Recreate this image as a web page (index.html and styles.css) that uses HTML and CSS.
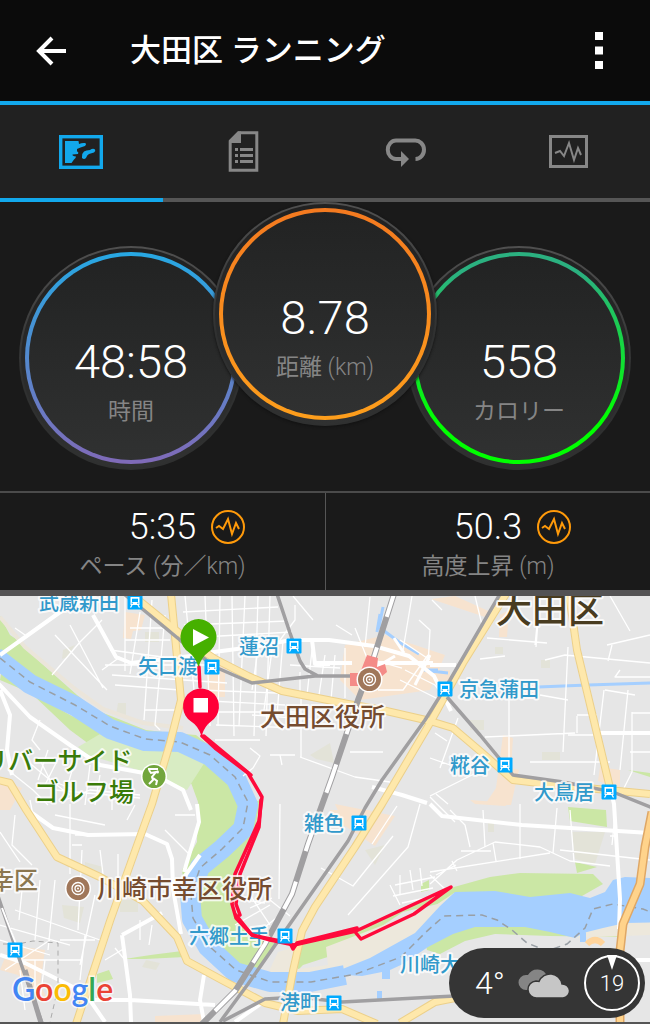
FILE: index.html
```html
<!DOCTYPE html>
<html lang="ja">
<head>
<meta charset="utf-8">
<meta name="viewport" content="width=device-width, initial-scale=1">
<title>大田区 ランニング</title>
<link rel="stylesheet" href="styles.css">
</head>
<body>
<div class="app">
  <header class="bar">
    <button class="bar-btn" aria-label="戻る">
      <svg width="30" height="30" viewBox="0 0 30 30"><path d="M16 2 3 15l13 13M3 15h27" fill="none" stroke="#fff" stroke-width="4"/></svg>
    </button>
    <h1 class="title">大田区 ランニング</h1>
    <button class="bar-btn bar-menu" aria-label="メニュー">
      <svg width="8" height="37" viewBox="0 0 8 37" fill="#fff"><path d="M0 0h8v8H0zM0 14.500h8v8H0zM0 29h8v8H0z"/></svg>
    </button>
  </header>

  <nav class="tabs" aria-label="表示">
    <button class="tab tab-on" aria-label="地図">
      <svg width="44" height="34" viewBox="0 0 44 34"><rect x="1.700" y="1.700" width="40.600" height="30.600" fill="none" stroke="currentColor" stroke-width="3.400"/><path fill="currentColor" d="M6 6H19.500L20 9Q23 7.500 26 8Q28 9 26 11L21.500 12.500L18 14L18 16.500Q20 17 19 19L13.500 19.500Q13 21 17 21.500Q17 23 15 24.500L12.500 28H6ZM23 22Q23 18 25 16.500Q27 15 31 15Q34 13 36 14.500Q37 16 35 17.500L30 19Q28 20 27 23Q25 25 23 23Z"/></svg>
    </button>
    <button class="tab" aria-label="統計">
      <svg width="31" height="41" viewBox="0 0 31 41"><path d="M10.500 1.700H28.800V39.300H2.200V10z" fill="none" stroke="currentColor" stroke-width="3"/><path d="M1 9.500 10 .5h3V12H1zM7 17h3v3H7zM12 17h13v3H12zM7 23h3v3H7zM12 23h13v3H12zM7 29h3v3H7zM12 29h13v3H12z" fill="currentColor"/></svg>
    </button>
    <button class="tab" aria-label="ラップ">
      <svg width="42" height="30" viewBox="0 0 42 30"><path d="M17 22h-6a8 9 0 0 1 0-18.500h19A8.500 9 0 0 1 30.500 22" fill="none" stroke="currentColor" stroke-width="4"/><path d="M16 14v16l8-8z" fill="currentColor"/></svg>
    </button>
    <button class="tab" aria-label="グラフ">
      <svg width="39" height="33" viewBox="0 0 39 33"><rect x="1.500" y="1.500" width="36" height="30" fill="none" stroke="currentColor" stroke-width="3"/><path d="m6 18 5-2 4 5 5-13 5 17 4-12 3 7" fill="none" stroke="currentColor" stroke-width="2"/></svg>
    </button>
  </nav>

  <main>
    <section class="dials">
      <div class="dial dial-low">
        <div class="ring ring-time"><span class="big">48:58</span><span class="label">時間</span></div>
      </div>
      <div class="dial dial-mid">
        <div class="ring ring-dist"><span class="big">8.78</span><span class="label">距離 <span class="unit">(km)</span></span></div>
      </div>
      <div class="dial dial-low">
        <div class="ring ring-cal"><span class="big">558</span><span class="label">カロリー</span></div>
      </div>
    </section>

    <section class="stats">
      <div class="stat">
        <div class="stat-row">
          <span class="value">5:35</span>
          <button class="chart" aria-label="ペースのグラフ"><svg width="34" height="34" viewBox="0 0 34 34" fill="none" stroke="#ff9a0a"><circle cx="17" cy="17" r="16" stroke-width="2"/><path d="m5 18 3-2 4 3 5-10 4 15 4-11 3 6" stroke-width="2"/></svg></button>
        </div>
        <span class="label">ペース <span class="unit">(</span>分／<span class="unit">km)</span></span>
      </div>
      <div class="stat">
        <div class="stat-row">
          <span class="value">50.3</span>
          <button class="chart" aria-label="高度のグラフ"><svg width="34" height="34" viewBox="0 0 34 34" fill="none" stroke="#ff9a0a"><circle cx="17" cy="17" r="16" stroke-width="2"/><path d="m5 18 3-2 4 3 5-10 4 15 4-11 3 6" stroke-width="2"/></svg></button>
        </div>
        <span class="label">高度上昇 <span class="unit">(m)</span></span>
      </div>
    </section>

    <section class="map" aria-label="地図">
      <svg class="map-art" viewBox="0 596 650 426">
        <defs>
          <g id="station"><rect x="-7.500" y="-7.500" width="15" height="15" rx="1" fill="#0af"/><path d="M-4.500-5h9V3h-9z" fill="#fff"/><path d="M-3-3.300h6V0h-6z" fill="#0af"/><path d="M-3.500 1.200h1.500M2 1.200h1.500" stroke="#0af"/><path d="m-3 3-1.500 2.500M3 3l1.500 2.500" stroke="#fff" stroke-width="1.300"/></g>
          <g id="office"><circle r="13" fill="#fff"/><circle r="11.500" fill="#a0775a"/><circle r="6" fill="none" stroke="#fff" stroke-width="1.300"/><circle r="3" fill="none" stroke="#fff" stroke-width="1.300"/><circle r="1" fill="#fff"/></g>
        </defs>
        <rect y="596" width="650" height="426" fill="#e6e6e6"/>

        <g fill="#f7e3cf">
          <path d="M125 612l20 3-4 15-8 1-2 8-8-1zM345 645l40-10 60 20-15 35-70 10-20-20zM205 650l20 12v35h-17zM430 672l20-2v20l-20-8zM455 596l40 18-4 5-60-20zM500 615l9-5-2 27h-8zM503 735l10 3-2 30 8 2-8 35-25-2 10-15zM600 767l20 3v18l-22-7zM0 780l22 8-12 22H0zM10 945l35 5-5 35 8 15-30-25-18-5zM330 810h40l-10 15-25 2zM335 804l60 12-20 30-30-20zM155 1016l50-2-5 8h-45zM470 800l40 3-5 3-30-2z"/>
        </g>
        <g fill="#e3e3d8">
          <path d="M145 632h14v10h-14zM63 650l12-5-8 12-5 2zM118 703h8v12h-10zM310 755l20-12 4 20-18-4zM495 647h8v7h-8zM541 660h9v8h-9zM470 720h14v10h-14zM542 752h18v8h-18zM85 862l18 5-3 6-15-3zM62 905l22 2-4 16-16-5zM120 900h18v12h-18zM146 960l14 3-4 7-14-3zM572 832h33l-10 32-20-5zM488 823h6v9h-6zM365 850l20-5-10 20z"/>
        </g>

        <g fill="#cbe7a5">
          <path d="M0 616l10 19 15 10 15 17 37 33 20 16-10 5L0 660zM0 680l35 15 35 20 50 24 80 8 30 40 15 35-20 30-28 26-13-2 13-26 5-46-10-20-32-15-45-12-18-7-27-20-37-35-30-32zM98 711l18 7 30 12 25 3 25 2 15 12-14 8-35-10-45-10z"/>
          <path d="M260 800l-4 25-20 45-2 40 10 20 32 14-25 35-30-16-25-35-3-45 30-30 20-20 10-30z"/>
          <path d="M190 780l40 5 6 30-20 28-15 20-18 15-1-8 15-28 1-40z"/>
          <path d="M300 945l60-15 94-43 36-10 30-4 73 1 10 10-35 20-100-7-65 15-60 40-40 13-6 6h-3z"/>
          <path d="M427 950l-4-15 25-10 60-5 112 3v14l-70-1-55-2-30 7-25 13zM568 807l38 3 1 17-37-6zM575 862l22 5-20 6zM628 770l22 3v4zM125 959q30-5 57-8l3 6-40 2zM97 974l12-4 4 9-16 4zM421 884l8-4v10l-8 2z"/>
        </g>
        <path d="M100 734l32 12 45 3 28 13-18 28-25-9-24-11-50-15-10-8z" fill="#d8ecc3"/>
        <path d="M278 952l17-5 3 22 30-4-2-18 110-42 18-12 10 2-80 67-50 18-70 2zM570 938l10-14 70-2v13z" fill="#ede8dc"/>
        <path d="M0 617l25 30 50 42 28 20 40 14 40 5" fill="none" stroke="#ebe5da" stroke-width="4"/>

        <g fill="none" stroke="#a5cfff">
          <path stroke-width="20" stroke-linejoin="round" d="M-5 657l35 27 45 22 35 23 35 12 35 1 30 14 26 23 12 26-5 24-21 20-22 18-10 27 2 25 16 28 27 25 35 10h40l35-7"/>
          <path stroke-width="3" d="M538 687l50-2 62-2M430 671l18 2M383 607l-4 20 20 15 20 12M424 670h14M377 632l3-18"/>
        </g>
        <path fill="#a5cfff" d="M330 974l40-16 45-25 25-27 15-14 40-1 35 6 40-4 20 5 15-6 8-12 12-3 45 2v43l-45 1-22 5-20 5-8 5-25-6-25-5h-50l-22 7-25 13-25 17-13 6v9h-8v-7l-20 4zM377 991h5v8h-5zM580 930h6v12h-6z"/>
        <path fill="none" stroke="#999fa5" stroke-width="1.500" stroke-dasharray="7 5" d="M0 658l30 24 45 23 35 21 35 13 35 3 30 13 25 22 13 25-5 26-21 21-22 19-9 27 2 23 16 28 27 24 35 12h40l45-8 45-17 25-25 18-16 38-1 15 5 15 10 15 13 20 8 20-7 18-16 8-19 20-5 30 5 20 8"/>

        <g fill="none" stroke="#fff" stroke-width="1.300" stroke-linejoin="round">
          <path d="M55 635l52 55M70 625l33 63M52 675l28-33 22-22M15 628l10 7M125 596v75M140 612l-10 62M152 600l-8 120M165 615l-10 110 5 5M105 665h115M110 650l60 8M115 685l65 5M112 675l115 8M145 710h30M125 640h45M130 628h42M120 657l-18 13M185 596l12 125M205 596l5 130M220 596l-2 130M232 596l2 140M245 596l-6 130M258 596l-4 140M270 596l-4 140"/>
          <path d="M183 612l95-5M184 625l104-4M184 638l108-6M190 700l95 5M200 690l100 4M210 712h90M216 725l84 3M215 740h45M258 650l-6 40M272 650l-8 60M283 640l-6 75M295 605v15l-15 20M300 672v25M312 650l-5 45M325 655l-6 40M335 655l-4 45M345 648v50M290 665l50 3"/>
          <path d="M250 748l10 8-7 12-10 8M270 755h25M301 695v62M300 757l55 20 35 5M350 752h33M252 715l70 5M280 755l2 10M293 596l20 24M352 635l-16-10M370 597l-5 50M378 690h25l25-35M400 640l30 20M400 680l40 20M405 670l30 15 15 20M355 628l12 30 35 10M412 596l-10 60M419 620l11 10-2 35"/>
          <path d="M432 600l10 10M487 638l60 5M537 625l-2 20M568 647l-5 105M545 660l20-5 85 8M612 645l-4 16M620 670l-5 7h35M607 645l43-10M540 597l-4 50M604 690l-10 85M628 690l-8 80M605 690l30 5M632 712v60l-10 20M632 713h18M630 752h20M577 716v17M577 715h20M485 737l90-4M509 700v60M540 695l28 5M568 735h25M530 762h80M435 733l12 8M440 768l18-50M430 758l20 7M430 796l20-10 30-15M436 794l12 10M450 810l15 15 5 22M483 810l2 37M520 804v55M557 808l-4 45M570 810l4 52M560 850l90 10M480 659l25-3M475 596l8 33M610 596l20 35M430 797l25 25"/>
          <path d="M430 884l27-24 38-18 45 5 30 14 40 5M436 875l20-10M452 861l5 10M493 843l3 18M430 872l120-19M461 851h30M615 815l-3 30M610 836h6M430 875l16 15M390 885l10 20M400 875v20M410 870l3 20M420 868l2 18M395 885l40-8M393 896l40-8M402 903l33-7M372 844l25-38M348 915l60-68 12-43M393 836l-40 50-32-18"/>
          <path d="M70 804v70M82 850l-4 80M75 835h43M72 845h10M100 850l3 24M118 854v28M30 800l5 25 22 30M15 815l-3 30 20 20M0 832l20 30M24 870l-5 50M40 880l-5 60M55 880l-7 70M15 910l85 30M0 925l70 20M0 940l50 15M5 970l45-30M95 895l-15 70M60 940h35M115 948l10 12M105 960l20-12M165 830l25 25M175 815h20M140 920v20M152 925l-3 20M85 935l-5 45M12 960h70M20 970l5 40M35 960v40M45 960l-5 40M280 804l-1 95M265 896l25 20M250 895l20 30M235 925l35-20M280 915l-25 20M250 908l22-10M230 898l35 5"/>
          <path d="M40 720l-8 20 8 10M20 755l30 25 25 10M8 770l25 20 15 15M40 760l10 20 20 15M48 750l-10 30M60 755l-15 30M75 760l-10 35M90 765l-5 40M100 775l-5 30M112 780v30M65 800l25-10 50 5M55 815l50 10M55 790l85 8M135 805l-8 15"/>
        </g>
        <g fill="none" stroke="#fff" stroke-width="4" stroke-linejoin="round">
          <path d="M0 655l63-45 30-14M-2 683l32 34 40 28 30 20 55 10 28 15 8 20M93 615l23 42 15 6 60-7 23-4 45-6 32-6h38l45 6 35 10 25 20 17 35M312 640l3 24h15M368 663h65M315 663h37M430 665h26M0 690l10 25-3 35 5 25M598 733h52M610 787l4 17 6 95-1 30M430 804l12 12 80 9 128 8M25 808l28 20 35 7 57-1 22 10 5 15 1 30 8 45M122 935l40-22M122 935l8 60 1 27M95 1000h35l85 5M200 855l-18 25M197 804l2 18-15 50M204 975l-4 25 4 22M0 955l25 8 60 30 20 29M372 787l30 8 25 8M625 960h25M235 1022l28-20"/>
          <path d="M394 638l10 15M395 656l-20 12M430 655l-15 30" stroke-width="3"/>
        </g>

        <g id="roads" fill="none" stroke-linejoin="round">
          <g stroke="#ecd08a" stroke-width="8">
            <path d="M171 594l6 63 4 43-11 43-18 61-12 33-30 84-34 103"/>
            <path d="M131 594l42 34 27 21 15 10 33 17 34 15 66 13 34 6 48 11 23 7 27 23 33 29 34 4 50 5 53 5"/>
            <path d="M506 594l-43 69-33 60-48 81-27 43-40 60-13 24-9 40-10 53"/>
            <path d="M569 594l8 56 16 67 17 71"/>
            <path d="M-2 780l12 3 15 25 32 49 43 20 43 24 34 36 10 24 33 18 45 24 33 8 44-2 35 15M400 1023l35-21 25-5"/>
          </g>
          <g stroke="#fee8ab" stroke-width="6">
            <path d="M171 594l6 63 4 43-11 43-18 61-12 33-30 84-34 103"/>
            <path d="M131 594l42 34 27 21 15 10 33 17 34 15 66 13 34 6 48 11 23 7 27 23 33 29 34 4 50 5 53 5"/>
            <path d="M506 594l-43 69-33 60-48 81-27 43-40 60-13 24-9 40-10 53"/>
            <path d="M569 594l8 56 16 67 17 71"/>
            <path d="M-2 780l12 3 15 25 32 49 43 20 43 24 34 36 10 24 33 18 45 24 33 8 44-2 35 15M400 1023l35-21 25-5"/>
          </g>
          <path d="M652 812l-7 35-5 37-17 40-3 27v71" stroke="#dfa765" stroke-width="9"/>
          <path d="M652 812l-7 35-5 37-17 40-3 27v71" stroke="#ffd38b" stroke-width="6"/>
        </g>

        <g fill="none" stroke="#a09fa1" stroke-width="3.500" stroke-linejoin="round">
          <path d="M124 594l16 13 40 33 35 27 37 16 63-7h37M277 594l13 39 10 28 5 8 13 7"/>
          <path d="M500 594l-50 86-25 40-43 60-17 28-17 33-56 80-44 63-28 38M447 697l33 38 33 40 50 7 50 10 40 16"/>
          <path d="M223 1021l42-22 33-2 44 5 93-5 20-1M-2 896l22 65 22 62"/>
        </g>
        <g fill="none">
          <path d="M394 594l-22 69-14 37-26 77-24 67-16 50-27 50-30 47-20 20-14 14" stroke="#a09fa1" stroke-width="6"/>
          <path d="M394 594l-22 69-14 37-26 77-24 67-16 50-27 50-30 47-20 20" stroke="#fff" stroke-width="4" stroke-dasharray="30 32" stroke-dashoffset="6"/>
          <path d="M2 908l14 36" stroke="#fff" stroke-width="2"/>
          <path d="M25 970l16 53" stroke="#a09fa1" stroke-width="5"/>
          <path d="M3 944h15l15-3 25 2v45l-8 34" stroke="#aaa" stroke-dasharray="5 4"/>
        </g>
        <path d="M350 673h10l7-18 11 3-1 9 8-3 2 8-17 14h-20z" fill="#f48b87"/>
        <path d="M587 944q8-8 16 0" fill="none" stroke="#ffd49b" stroke-width="6"/>

        <g class="place blue">
          <text x="39" y="610">武蔵新田</text>
          <text x="138" y="674">矢口渡</text>
          <text x="239" y="654">蓮沼</text>
          <text x="459" y="697">京急蒲田</text>
          <text x="450" y="773">糀谷</text>
          <text x="534" y="800">大鳥居</text>
          <text x="304" y="831">雑色</text>
          <text x="189" y="944">六郷土手</text>
          <text x="280" y="1010">港町</text>
          <text x="400" y="972">川崎大</text>
        </g>

        <g fill="none" stroke="#ff0a3c" stroke-width="3.500" stroke-linejoin="round" stroke-linecap="round">
          <path d="M199 667l1 20M202 736l13 12 33 25 14 24-3 24-24 53-3 30 4 14 16 17 18 5 24 5 62-14 13-6 82-38-37 27-53 25-5-6"/>
          <path d="M261 800l-2 27-19 47-4 30 4 11M204 736l47 39M236 915l16 20 38 8 3 6 4-6 60-15"/>
        </g>

        <g class="place brown">
          <text x="260" y="726">大田区役所</text>
          <text x="97" y="898">川崎市幸区役所</text>
        </g>
        <g class="place green">
          <text x="-17" y="770">リバーサイド</text>
          <text x="34" y="801">ゴルフ場</text>
        </g>
        <text class="place ward" x="-10" y="889">幸区</text>
        <text class="place city" x="496" y="623">大田区</text>

        <use href="#station" x="135" y="602"/>
        <use href="#station" x="212" y="667"/>
        <use href="#station" x="294" y="646"/>
        <use href="#station" x="445" y="689"/>
        <use href="#station" x="505" y="765"/>
        <use href="#station" x="609" y="792"/>
        <use href="#station" x="359" y="823"/>
        <use href="#station" x="285" y="936"/>
        <use href="#station" x="334" y="1003"/>
        <use href="#station" x="15" y="950"/>
        <use href="#office" x="369.500" y="679.500"/>
        <use href="#office" x="78" y="888.500"/>
        <circle cx="154" cy="776.500" r="13" fill="#fff"/>
        <circle cx="154" cy="776.500" r="11.500" fill="#72a63c"/>
        <path d="M148 769h10M149 770l2 3 5-1-4 5 1 3-4 4M153 778l4 3-1 4" fill="none" stroke="#fff" stroke-width="2"/>
        <circle cx="157.500" cy="772" r="1.500" fill="#fff"/>

        <path d="M198.500 667q-3-10-10-15a18 18 0 1 1 20 0q-7 5-10 15z" fill="#46b000"/>
        <path d="M193 629l16 8.500-16 8.500z" fill="#fff"/>
        <path d="M201.500 736q-3-10-11-15a18 18 0 1 1 21 0q-7 5-10 15z" fill="#ff0038"/>
        <path d="M193.500 698h14.500v14.500h-14.500z" fill="#fff"/>

        <text class="google" x="12" y="1001"><tspan fill="#4285f4">G</tspan><tspan fill="#ea4335">o</tspan><tspan fill="#fbbc05">o</tspan><tspan fill="#4285f4">g</tspan><tspan fill="#34a853">l</tspan><tspan fill="#ea4335">e</tspan></text>
      </svg>

      <div class="weather">
        <span class="temp">4°</span>
        <svg width="52" height="30" viewBox="0 0 52 30"><path d="M8 22A7.500 7.500 0 0 1 8 7H10A10.500 10.500 0 0 1 29 8V22Z" fill="#858585"/><path d="M19 30A8.500 8.500 0 0 1 18 13L21 13.500A12 12 0 0 1 44 16A7 7 0 0 1 45 30Z" fill="#c6c6c6" stroke="#353535" stroke-width="1.500"/></svg>
        <div class="wind">
          <svg class="needle" width="10" height="15" viewBox="0 0 10 15"><path d="M0 0h10L5 15z" fill="#fff"/></svg>
          <span>19</span>
        </div>
      </div>
    </section>
  </main>
</div>
</body>
</html>
```

FILE: styles.css
```css
* { box-sizing: border-box; }

body {
  margin: 0;
  background: #1a1a1a;
  color: #fff;
  font-family: Roboto, "Noto Sans CJK JP", sans-serif;
}

button {
  display: flex;
  align-items: center;
  justify-content: center;
  padding: 0;
  border: 0;
  background: none;
  color: inherit;
}

svg { display: block; }

.bar {
  display: flex;
  align-items: center;
  height: 105px;
  padding: 0 27px 0 36px;
  border-bottom: 4px solid #12a8ec;
  background: #0b0b0b;
}

.bar-btn { width: 30px; height: 48px; }
.bar-menu { width: 48px; }

.title {
  flex: 1;
  margin: 0 0 0 64px;
  font-size: 31px;
  line-height: 44px;
  font-weight: 500;
}

.tabs {
  display: grid;
  grid-template-columns: repeat(4, 1fr);
  background: #212121;
}

.tab {
  height: 97px;
  border-bottom: 4px solid #565656;
  color: #878787;
}

.tab-on { border-color: #12a8ec; color: #12a8ec; }

.dials {
  display: flex;
  justify-content: center;
  height: 289px;
  background: #1a1a1a;
}

.dial {
  display: flex;
  flex: none;
  width: 224px;
  height: 224px;
  padding: 4px;
  border: 2px solid transparent;
  border-radius: 50%;
  background:
    linear-gradient(#212121, #303131) padding-box,
    linear-gradient(#505050, #2f3030 60%) border-box;
}

.dial-low { margin-top: 44px; }

.dial-mid {
  position: relative;
  z-index: 1;
  margin: 0 -30px;
  box-shadow: 0 1px 3px #111;
}

.ring {
  display: flex;
  flex: 1;
  flex-direction: column;
  align-items: center;
  padding-top: 78px;
  border: 4px solid transparent;
  border-radius: 50%;
}

.ring-time { background: linear-gradient(#222323, #303131) padding-box, linear-gradient(#27a8e3, #806ab8) border-box; }
.ring-dist { background: linear-gradient(#222323, #303131) padding-box, linear-gradient(#f47a20, #fd9e1c) border-box; }
.ring-cal { background: linear-gradient(#222323, #303131) padding-box, linear-gradient(#2bb180 10%, #0f0 80%) border-box; }

.big { font-size: 47px; line-height: 56px; font-weight: 300; }

.label {
  color: #858585;
  font-size: 23px;
  line-height: 32px;
  font-weight: 400;
  margin-top: 6px;
}

.unit { font-weight: 300; }

.stats {
  display: grid;
  grid-template-columns: 1fr 1fr;
  border-top: 2px solid #4b4b4b;
  border-bottom: 6px solid #545354;
}

.stat {
  display: flex;
  flex-direction: column;
  align-items: center;
  height: 97px;
  padding-top: 14px;
}

.stat + .stat { border-left: 1px solid #565656; }
.stat .label { margin-top: 4px; }

.stat-row {
  display: grid;
  grid-template-columns: 1fr auto 1fr;
  column-gap: 15px;
  align-items: center;
  width: 100%;
  height: 40px;
}

.value { grid-column: 2; font-size: 36px; line-height: 40px; font-weight: 300; }
.chart { justify-self: start; }

.map {
  position: relative;
  overflow: hidden;
  border-bottom: 2px solid #565656;
}

.map-art { width: 100%; height: auto; }

.place {
  font-family: "Noto Sans CJK JP", sans-serif;
  font-weight: 500;
  paint-order: stroke;
  stroke: #fff;
  stroke-opacity: .8;
  stroke-width: 4px;
  stroke-linejoin: round;
}

.blue { font-size: 20px; fill: #3199cb; }
.brown { font-size: 25px; fill: #754c30; }
.green { font-size: 25px; fill: #397b08; }
.ward { font-size: 24px; fill: #8b7750; }
.city { font-size: 36px; fill: #493c20; }

.google {
  font-family: Lato, sans-serif;
  font-size: 32px;
  font-weight: 600;
  paint-order: stroke;
  stroke: #fff;
  stroke-opacity: .7;
  stroke-width: 3px;
}

.weather {
  position: absolute;
  right: 5px;
  bottom: 4px;
  display: flex;
  align-items: center;
  justify-content: space-between;
  width: 196px;
  height: 70px;
  padding: 0 5px 0 26px;
  border-radius: 35px;
  background: #353535;
}

.temp { font-size: 32px; font-weight: 300; }

.wind {
  position: relative;
  display: flex;
  align-items: center;
  justify-content: center;
  width: 56px;
  height: 56px;
  border: 2px solid #fff;
  border-radius: 50%;
  font-size: 22px;
  font-weight: 300;
}

.needle { position: absolute; top: -2px; left: 21px; }
```
